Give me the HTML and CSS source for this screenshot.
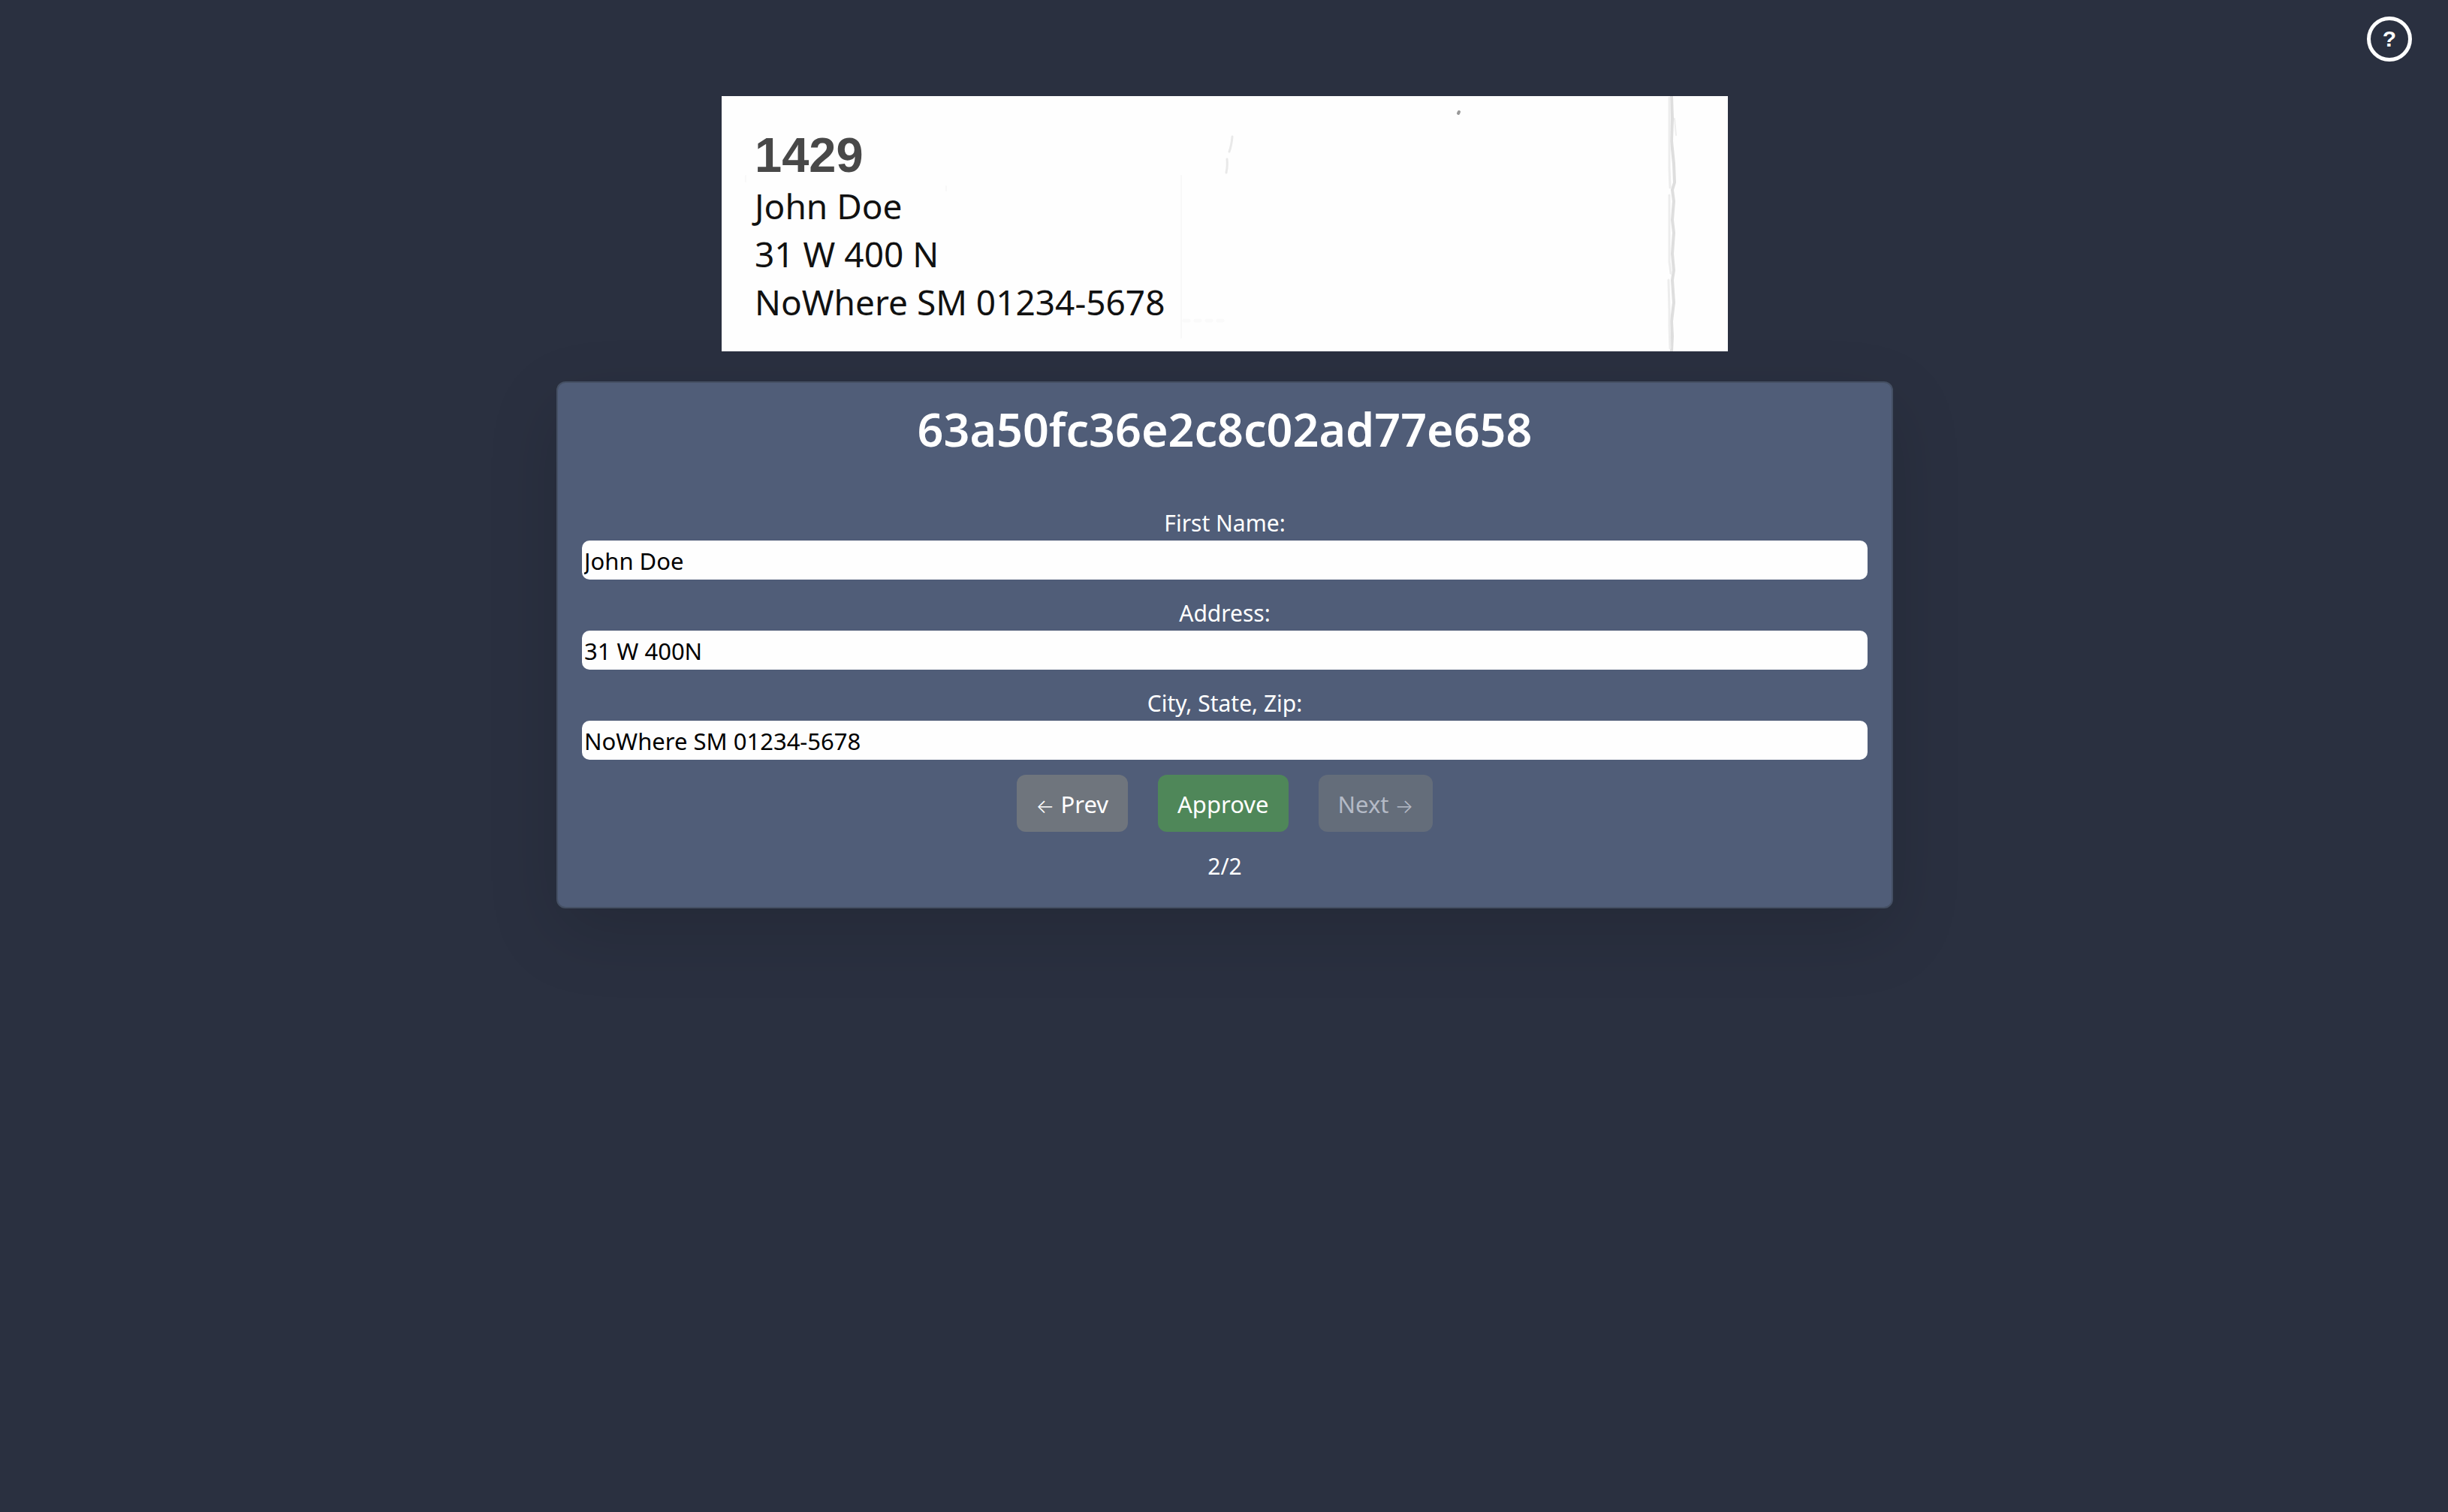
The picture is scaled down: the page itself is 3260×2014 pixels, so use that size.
FILE: index.html
```html
<!DOCTYPE html>
<html lang="en">
<head>
  <meta charset="utf-8">
  <meta name="viewport" content="width=device-width, initial-scale=1">
  <title>Address review</title>
  <link rel="stylesheet" href="styles.css">
</head>
<body>
  <header class="topbar">
    <button class="help" type="button" aria-label="Help">?</button>
  </header>
  <main class="review">
    <section class="scan" aria-label="Scanned label">
      <svg class="scan-marks" viewBox="0 0 1340 340" preserveAspectRatio="none" aria-hidden="true">
        <g fill="none" stroke-linecap="round">
          <path d="M1265 0 L1266 30 L1265 60 L1268 90 L1269 115 L1266 125 L1268 140 L1266 165 L1268 182 L1266 210 L1268 232 L1266 245 L1268 275 L1265 300 L1266 320 L1265 340" stroke="#dedede" stroke-width="4"/>
          <path d="M1262 2 L1262 60 L1262 95 L1263 122 M1262 132 L1262 188 L1262 220 L1264 236 M1261 245 L1262 285 L1262 305 L1263 336" stroke="#ededed" stroke-width="3"/>
          <path d="M1269 30 L1271 52" stroke="#eeeeee" stroke-width="2"/>
          <path d="M680 54 Q679 66 676 74 M673 84 Q674 92 672 102" stroke="#e9e9e9" stroke-width="3"/>
          <path d="M982 21 L981 23" stroke="#999999" stroke-width="4"/>
          <path d="M612 106 V322 M32 106 V114 M299 120 V126" stroke="#f8f8f8" stroke-width="2"/>
          <path d="M616 299 H672" stroke="#fafafa" stroke-width="5" stroke-dasharray="6 9"/>
        </g>
      </svg>
      <p class="scan-number">1429</p>
      <p class="scan-line">John Doe</p>
      <p class="scan-line">31 W 400 N</p>
      <p class="scan-line">NoWhere SM 01234-5678</p>
    </section>
    <form class="card">
      <h1 class="card-title">63a50fc36e2c8c02ad77e658</h1>
      <div class="field">
        <label for="name">First Name:</label>
        <input id="name" type="text" value="John Doe">
      </div>
      <div class="field">
        <label for="address">Address:</label>
        <input id="address" type="text" value="31 W 400N">
      </div>
      <div class="field">
        <label for="city">City, State, Zip:</label>
        <input id="city" type="text" value="NoWhere SM 01234-5678">
      </div>
      <div class="actions">
        <button class="btn" type="button"><span class="arrow">←</span> Prev</button>
        <button class="btn btn-approve" type="button">Approve</button>
        <button class="btn" type="button" disabled>Next <span class="arrow">→</span></button>
      </div>
      <p class="pager">2/2</p>
    </form>
  </main>
</body>
</html>
```
FILE: styles.css
```css
* {
  box-sizing: border-box;
}

body {
  margin: 0;
  min-height: 100vh;
  background: #2a3040;
  color: #fff;
  font-family: "Noto Sans", "Open Sans", sans-serif;
  font-size: 30px;
  line-height: 48px;
}

p,
h1 {
  margin: 0;
}

input,
button {
  font: inherit;
}

.topbar {
  display: flex;
  justify-content: flex-end;
  padding: 22px 48px;
}

.help {
  width: 60px;
  height: 60px;
  padding: 0;
  border: 5px solid #fff;
  border-radius: 50%;
  background: transparent;
  color: #fff;
  font: bold 30px/50px "Liberation Sans", sans-serif;
}

.review {
  display: flex;
  flex-direction: column;
  align-items: center;
  gap: 40px;
  padding: 24px 32px 24px 34px;
}

.scan {
  position: relative;
  width: 100%;
  max-width: 1340px;
  padding: 44px 44px 34px;
  background: #fefefe;
  color: #111;
}

.scan-marks {
  position: absolute;
  inset: 0;
  width: 100%;
  height: 100%;
}

.scan-number {
  color: #484848;
  font: bold 65px/70px "Liberation Sans", sans-serif;
}

.scan-line {
  font-size: 46px;
  line-height: 64px;
}

.card {
  display: flex;
  flex-direction: column;
  width: 100%;
  max-width: 1780px;
  padding: 24px 32px 30px;
  border: 2px solid #455064;
  border-radius: 12px;
  background: #505d78;
  box-shadow: 0 32px 96px rgba(0, 0, 0, 0.14);
  text-align: center;
}

.card-title {
  margin-bottom: 42px;
  font-size: 61px;
  font-weight: 600;
  line-height: 76px;
}

.field {
  display: flex;
  flex-direction: column;
  padding-top: 20px;
}

.field label {
  padding-top: 2px;
  line-height: 46px;
}

.field input {
  width: 100%;
  height: 52px;
  padding: 2px 3px 0;
  border: 0;
  border-radius: 10px;
  background: #fefefe;
  color: #000;
  font-size: 31px;
}

.actions {
  display: flex;
  justify-content: center;
  gap: 40px;
  padding: 20px 0 22px;
}

.btn {
  padding: 15px 26px 13px;
  border: 0;
  border-radius: 12px;
  background: #6f757d;
  color: #fff;
  font-size: 31px;
  line-height: 48px;
}

.btn-approve {
  background: #4f8759;
}

.btn:disabled {
  background: #646d7a;
  color: #b4bac6;
}

.arrow {
  font-family: "Inter", sans-serif;
  font-size: 26px;
  font-weight: 300;
  line-height: 1;
}
```
